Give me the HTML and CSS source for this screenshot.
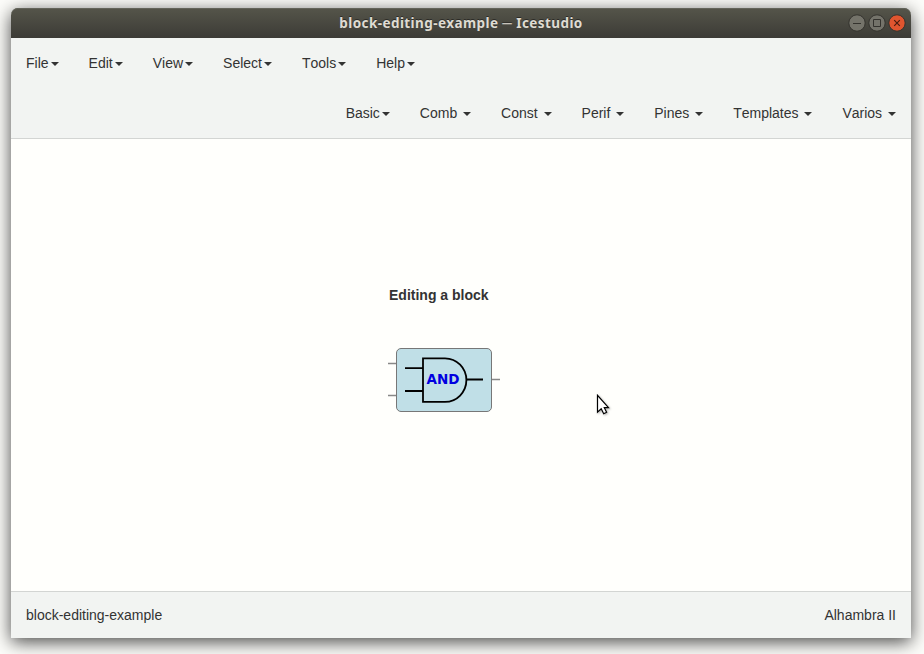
FILE: index.html
```html
<!DOCTYPE html>
<html lang="en">
<head>
<meta charset="utf-8">
<title>block-editing-example ─ Icestudio</title>
<link rel="stylesheet" href="styles.css">
</head>
<body>
<div class="window">
  <div class="titlebar">
    <span class="title">block-editing-example <span class="dash">─</span> Icestudio</span>
    <div class="controls">
      <svg width="18" height="18" viewBox="0 0 18 18"><circle class="btn" cx="9" cy="9" r="8.2"/><path class="glyph" d="M5 9.5h8"/></svg>
      <svg width="18" height="18" viewBox="0 0 18 18"><circle class="btn" cx="9" cy="9" r="8.2"/><path class="glyph" d="M5.5 5.5h7v7h-7z"/></svg>
      <svg width="18" height="18" viewBox="0 0 18 18"><circle class="btn close" cx="9" cy="9" r="8.2"/><path class="glyph cross" d="M6.2 6.2l5.6 5.6M11.8 6.2l-5.6 5.6"/></svg>
    </div>
  </div>
  <header class="navbar">
    <nav class="menu">
      <a>File<i class="caret"></i></a>
      <a>Edit<i class="caret"></i></a>
      <a>View<i class="caret"></i></a>
      <a>Select<i class="caret"></i></a>
      <a>Tools<i class="caret"></i></a>
      <a>Help<i class="caret"></i></a>
    </nav>
    <nav class="menu menu-right">
      <a>Basic<i class="caret"></i></a>
      <a>Comb <i class="caret"></i></a>
      <a>Const <i class="caret"></i></a>
      <a>Perif <i class="caret"></i></a>
      <a>Pines <i class="caret"></i></a>
      <a>Templates <i class="caret"></i></a>
      <a>Varios <i class="caret"></i></a>
    </nav>
  </header>
  <main class="canvas">
    <div class="info">Editing a block</div>
    <svg class="block" width="112" height="66" viewBox="0 0 112 66">
      <path class="port" d="M0 16.5h8M0 48.5h8M104 32.5h8"/>
      <rect class="body" x="8.5" y="1.5" width="95" height="63" rx="4.5"/>
      <path class="gate" d="M17 21.1h18M17 44h18M78 32.5h17"/>
      <path class="gate" d="M35 11.3h22a21.4 21.8 0 0 1 0 43.6h-22z"/>
      <text class="label" x="38.5" y="37" textLength="33" lengthAdjust="spacingAndGlyphs">AND</text>
    </svg>
    <svg class="pointer" width="16" height="22" viewBox="0 0 16 22"><path d="M1.5 1.3v16.9l3.7-3.4 2.5 5 2.9-1.5-2.3-4.6h4.2z"/></svg>
  </main>
  <footer class="footer"><span>block-editing-example</span><span>Alhambra II</span></footer>
</div>
</body>
</html>
```
FILE: styles.css
```css
* { box-sizing: border-box; }
body {
  margin: 0;
  height: 654px;
  padding: 8px 13px 16px 11px;
  overflow: hidden;
  background: #fdfdfa;
  font: 14px/20px "Liberation Sans", Arial, sans-serif;
  font-kerning: none;
  color: #333;
}
.window {
  width: 900px;
  height: 630px;
  display: flex;
  flex-direction: column;
  border-radius: 7px 7px 0 0;
  box-shadow: 0 4px 18px rgba(0, 0, 0, .72);
}
.titlebar {
  height: 30px;
  display: grid;
  grid-template-columns: 1fr auto 1fr;
  align-items: center;
  padding: 0 5px;
  border-radius: 7px 7px 0 0;
  background: linear-gradient(#55554a, #3c3b36);
  box-shadow: inset 0 1px #63645a;
}
.title {
  grid-column: 2;
  color: #dfdbd2;
  font: bold 13.5px/20px "Noto Sans", sans-serif;
  letter-spacing: .42px;
  white-space: nowrap;
  text-shadow: 0 -1px #2c2b27;
}
.dash { font-weight: normal; }
.controls { display: flex; gap: 2px; justify-self: end; }
.btn { fill: #74736a; stroke: #34332e; }
.close { fill: #e0552f; }
.glyph { fill: none; stroke: #34332e; }
.cross { stroke: #4a1c10; stroke-width: 1.2; }
.navbar {
  height: 101px;
  background: #f2f4f2;
  border-bottom: 1px solid #d3d5d3;
}
.menu { display: flex; height: 50px; }
.menu-right { justify-content: flex-end; }
.menu a { padding: 15px; white-space: pre; }
.caret {
  display: inline-block;
  margin-left: 2px;
  vertical-align: middle;
  border-top: 4px solid #333;
  border-left: 4px solid transparent;
  border-right: 4px solid transparent;
}
.canvas {
  position: relative;
  flex: 1;
  background: #fffffc;
  padding: 146px 0 0 377px;
}
.info { padding-left: 1px; font-weight: bold; }
.block { display: block; margin-top: 42px; }
.port { stroke: #888; stroke-width: 1.5; }
.body { fill: #c0dfe7; stroke: #777; }
.gate { fill: none; stroke: #000; stroke-width: 1.8; }
.label { fill: #0000e0; font: bold 13.5px "DejaVu Sans", sans-serif; }
.pointer { position: absolute; left: 585px; top: 255px; filter: drop-shadow(1px 1px 1px rgba(0, 0, 0, .3)); }
.pointer path { fill: #fff; stroke: #000; stroke-width: 1.2; }
.footer {
  height: 47px;
  display: flex;
  justify-content: space-between;
  padding: 13px 15px;
  background: #f2f4f2;
  border-top: 1px solid #d3d5d3;
}
```
